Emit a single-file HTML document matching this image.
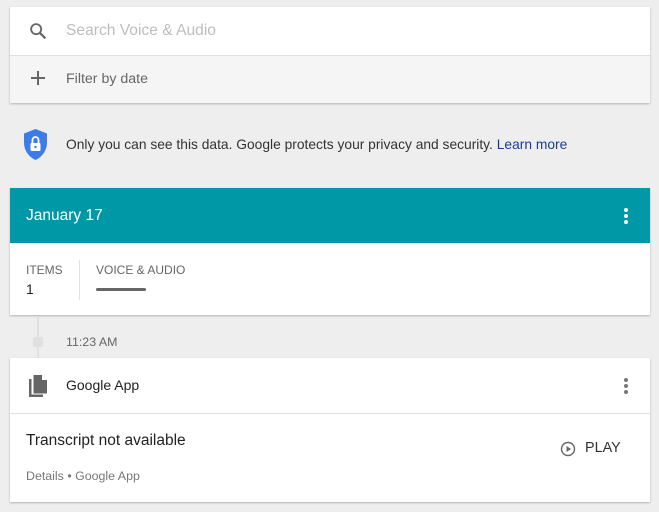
<!DOCTYPE html>
<html><head><meta charset="utf-8"><style>
*{margin:0;padding:0;box-sizing:border-box}
body{width:659px;height:512px;background:#eeeeee;font-family:"Liberation Sans",Arial,sans-serif;position:relative;overflow:hidden}
.a{position:absolute}
.card{position:absolute;left:10px;width:640px;background:#fff;box-shadow:0 1px 2px rgba(0,0,0,.25)}
</style></head><body>
<div class="card" style="top:7px;height:96px;">
  <div class="a" style="left:0;top:48px;width:640px;height:48px;background:#f5f5f5;border-top:1px solid #e0e0e0"></div>
  <svg class="a" style="left:17px;top:13px" width="22" height="22" viewBox="0 0 24 24"><circle cx="10" cy="10" r="5.5" fill="none" stroke="#666" stroke-width="2"/><path d="M14 14l6 6" stroke="#666" stroke-width="2.4"/></svg>
  <div class="a" style="left:56px;top:15px;font-size:15.6px;color:#bdbdbd">Search Voice &amp; Audio</div>
  <svg class="a" style="left:20px;top:63px" width="16" height="16" viewBox="0 0 16 16"><path d="M8 1v14M1 8h14" stroke="#666" stroke-width="2"/></svg>
  <div class="a" style="left:56px;top:64px;font-size:14.2px;color:#666">Filter by date</div>
</div>
<svg class="a" style="left:22px;top:128px" width="27" height="34" viewBox="0 0 27 34"><path d="M13.5 1L25 5.5v9c0 8-5 14.5-11.5 17.5C7 29 2 22.5 2 14.5v-9z" fill="#3d7be6"/><rect x="8.5" y="15" width="10" height="8" rx="1" fill="#fff"/><path d="M10.5 15v-3a3 3 0 0 1 6 0v3" fill="none" stroke="#fff" stroke-width="1.8"/><circle cx="13.5" cy="19" r="1.2" fill="#3d7be6"/></svg>
<div class="a" style="left:66px;top:137px;font-size:13.8px;color:#333">Only you can see this data. Google protects your privacy and security. <span style="color:#1a3a9a">Learn more</span></div>
<div class="card" style="top:188px;height:127px;">
  <div class="a" style="left:0;top:0;width:640px;height:55px;background:#0097a7"></div>
  <div class="a" style="left:16px;top:19px;font-size:15.5px;color:#fff">January 17</div>
  <svg class="a" style="left:612px;top:19px" width="8" height="18"><circle cx="4" cy="3" r="2" fill="#fff"/><circle cx="4" cy="9" r="2" fill="#fff"/><circle cx="4" cy="15" r="2" fill="#fff"/></svg>
  <div class="a" style="left:16px;top:75px;font-size:12px;color:#666">ITEMS</div>
  <div class="a" style="left:16px;top:93px;font-size:14px;color:#222">1</div>
  <div class="a" style="left:69px;top:72px;width:1px;height:40px;background:#e0e0e0"></div>
  <div class="a" style="left:86px;top:75px;font-size:12px;color:#666">VOICE &amp; AUDIO</div>
  <div class="a" style="left:86px;top:100px;width:50px;height:3px;border-radius:2px;background:#666"></div>
</div>
<div class="a" style="left:37px;top:316px;width:2px;height:42px;background:#e0e0e0"></div>
<div class="a" style="left:33px;top:337px;width:10px;height:10px;border-radius:2px;background:#e0e0e0"></div>
<div class="a" style="left:66px;top:335px;font-size:12.4px;color:#666">11:23 AM</div>
<div class="card" style="top:358px;height:144px;">
  <svg class="a" style="left:17px;top:16px" width="22" height="24" viewBox="0 0 22 24"><path d="M2 5v18h14v-2.5H4.5V5z" fill="#666"/><path d="M6.5 1h8.5l5 5v13.5H6.5z" fill="#666"/><path d="M15 1v5h5z" fill="#fff"/></svg>
  <div class="a" style="left:56px;top:19px;font-size:14px;color:#222">Google App</div>
  <svg class="a" style="left:612px;top:19px" width="8" height="18"><circle cx="4" cy="3" r="2" fill="#777"/><circle cx="4" cy="9" r="2" fill="#777"/><circle cx="4" cy="15" r="2" fill="#777"/></svg>
  <div class="a" style="left:0;top:55px;width:640px;height:1px;background:#e0e0e0"></div>
  <div class="a" style="left:16px;top:74px;font-size:15.5px;color:#222">Transcript not available</div>
  <div class="a" style="left:16px;top:111px;font-size:12.4px;color:#777">Details • Google App</div>
  <svg class="a" style="left:550px;top:83px" width="16" height="16" viewBox="0 0 16 16"><circle cx="8" cy="8" r="6.5" fill="none" stroke="#666" stroke-width="1.4"/><path d="M6.5 5v6l4.5-3z" fill="#666"/></svg>
  <div class="a" style="left:575px;top:82px;font-size:14.4px;color:#333">PLAY</div>
</div>
</body></html>
